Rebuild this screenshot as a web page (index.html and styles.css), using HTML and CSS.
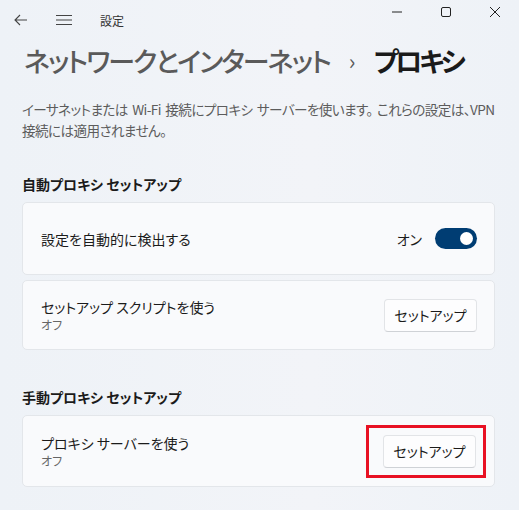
FILE: index.html
```html
<html>
<head>
  <title>設定</title>
  <link rel="stylesheet" href="styles.css">
</head>
<body>
<div class="window">
  <div class="titlebar">
    <div class="nav">
      <svg class="ico back" width="14" height="12" viewBox="0 0 14 12"><path d="M6 1 L1 6 L6 11 M1 6 H13" fill="none" stroke="#444" stroke-width="1.1"/></svg>
      <svg class="ico menu" width="16" height="12" viewBox="0 0 16 12"><path d="M0 1.5 H16 M0 6 H16 M0 10.5 H16" stroke="#444" stroke-width="1.1"/></svg>
      <span class="app">設定</span>
    </div>
    <div class="controls">
      <svg width="12" height="12" viewBox="0 0 12 12"><path d="M1 6 H11" stroke="#222" stroke-width="1"/></svg>
      <svg width="12" height="12" viewBox="0 0 12 12"><rect x="1.5" y="1.5" width="9" height="9" rx="1.5" fill="none" stroke="#222" stroke-width="1"/></svg>
      <svg width="12" height="12" viewBox="0 0 12 12"><path d="M1 1 L11 11 M11 1 L1 11" stroke="#222" stroke-width="1"/></svg>
    </div>
  </div>

  <h1 class="crumbs"><span class="parent">ネットワークとインターネット</span><span class="sep">›</span><span class="current">プロキシ</span></h1>

  <p class="desc">イーサネットまたは Wi-Fi 接続にプロキシ サーバーを使います。 これらの設定は、VPN<br>接続には適用されません。</p>

  <h2 class="section">自動プロキシ セットアップ</h2>
  <div class="card tall">
    <div class="label">設定を自動的に検出する</div>
    <div class="right">
      <span class="state">オン</span>
      <span class="toggle"><span class="knob"></span></span>
    </div>
  </div>
  <div class="card">
    <div class="label">セットアップ スクリプトを使う<div class="sub">オフ</div></div>
    <button class="btn">セットアップ</button>
  </div>

  <h2 class="section second">手動プロキシ セットアップ</h2>
  <div class="card manual">
    <div class="label">プロキシ サーバーを使う<div class="sub">オフ</div></div>
    <div class="mark"><button class="btn">セットアップ</button></div>
  </div>
</div>
</body>
</html>
```

FILE: styles.css
```css
body {margin: 0; background: #eef2f7; font-family: "Noto Sans CJK JP", "Noto Sans", sans-serif; font-feature-settings: "palt"; color: #1b1b1b;}
.window {width: 519px; height: 510px; background: linear-gradient(90deg, #eef2f7, #f2f4f8 60%, #eef2f7); overflow: hidden;}

.titlebar {display: flex; justify-content: space-between; height: 40px;}
.nav {display: flex; align-items: center; padding-left: 14px; height: 40px;}
.nav .menu {margin-left: 28px;}
.nav .app {margin-left: 28px; font-size: 12px; color: #333;}
.controls {display: flex; gap: 37px; padding: 6px 18px 0 0; height: 14px;}

.crumbs {margin: 2px 0 0 24px; font-size: 27px; line-height: 38px; font-weight: 500; color: #5a5a5a; letter-spacing: -1.9px; white-space: nowrap;}
.crumbs .sep {font-size: 22px; font-weight: 400; margin: 0 20px 0 19px; position: relative; top: -2px;}
.crumbs .current {color: #1a1a1a; font-weight: 700; letter-spacing: -3.4px;}

.desc {margin: 18px 0 0 22px; font-size: 13.6px; line-height: 21px; color: #5c5c5c; letter-spacing: -0.6px; word-spacing: 2px; white-space: nowrap;}

.section {margin: 33px 0 8px 22px; font-size: 14px; line-height: 20px; font-weight: 700; color: #1b1b1b;}
.section.second {margin-top: 37px;}

.card {display: flex; justify-content: space-between; align-items: center; margin: 0 24px 5px 22px; height: 68px; padding: 0 17px 0 18px; background: #f9fafc; border: 1px solid #e3e6ea; border-radius: 5px;}
.card.tall {height: 71px;}
.card.manual {height: 70px;}
.label {font-size: 14px; line-height: 20px;}
.sub {font-size: 12px; line-height: 16px; color: #666;}
.right {display: flex; align-items: center; gap: 13px;}
.state {font-size: 14px;}
.toggle {display: flex; justify-content: flex-end; align-items: center; width: 42px; height: 21px; border-radius: 11px; background: #003d73; box-sizing: border-box; padding-right: 4px;}
.knob {width: 13px; height: 13px; border-radius: 50%; background: #fff;}

.btn {width: 93px; height: 33px; font-family: inherit; font-feature-settings: "palt"; font-size: 14px; color: #1b1b1b; background: #fdfdfe; border: 1px solid #e2e4e7; border-bottom-color: #cfd2d6; border-radius: 4px;}
.mark {margin: 0 -9px 0 0; padding: 7px 7px 7px 14px; border: 3px solid #e81123;}
```
